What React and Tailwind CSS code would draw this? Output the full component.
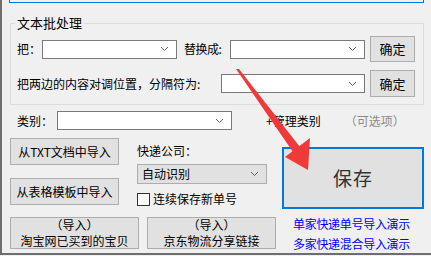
import React from 'react';

function Chevron() {
  return (
    <svg width="9" height="6" viewBox="0 0 9 6" className="shrink-0">
      <polyline points="1,1 4.5,4.5 8,1" fill="none" stroke="#606060" strokeWidth="1" />
    </svg>
  );
}

function Combo({ className, children }) {
  return (
    <div className={`flex items-center justify-between border border-[#7a7a7a] pl-[4px] pr-[7px] ${className}`}>
      <span className="leading-none">{children}</span>
      <Chevron />
    </div>
  );
}

function Btn({ className, children }) {
  return (
    <div className={`flex flex-col items-center justify-center border border-[#adadad] bg-[#e1e1e1] text-black ${className}`}>
      {children}
    </div>
  );
}

export default function App() {
  return (
    <div className="relative w-[431px] h-[256px] overflow-hidden bg-[#f0f0f0] font-['Noto_Sans_CJK_SC',sans-serif] text-[12px] text-black">
      <div className="h-[255px] border-l-2 border-b-2 border-[#6e6e6e]">
        {/* top input edge */}
        <div className="ml-[7px] w-[415px] h-[3px] border-x border-b border-[#0078d7] bg-[#f0f0f0]" />

        {/* 文本批处理 */}
        <fieldset className="ml-[8px] mt-[13px] w-[414px] border border-[#dcdcdc] pt-[6px] pb-[7px]">
          <legend className="ml-[4px] px-[2px] text-[13px] leading-[14px]">文本批处理</legend>

          <div className="flex items-center h-[26px]">
            <span className="ml-[6px] w-[25px] whitespace-nowrap">把：</span>
            <Combo className="w-[135px] h-[19px] bg-white" />
            <span className="ml-[7px] w-[46px] whitespace-nowrap tracking-[-0.5px]">替换成:</span>
            <Combo className="w-[135px] h-[19px] bg-white" />
            <Btn className="ml-[5px] w-[45px] h-[26px] text-[13px]">确定</Btn>
          </div>

          <div className="flex items-center h-[27px] mt-[8px]">
            <span className="ml-[6px] w-[204px] whitespace-nowrap">把两边的内容对调位置，分隔符为:</span>
            <Combo className="w-[144px] h-[19px] bg-white" />
            <Btn className="ml-[5px] w-[45px] h-[27px] text-[13px]">确定</Btn>
          </div>
        </fieldset>

        {/* 类别 */}
        <div className="flex items-center mt-[6px] h-[19px]">
          <span className="ml-[15px] w-[40px] whitespace-nowrap">类别：</span>
          <Combo className="w-[175px] h-[19px] bg-white" />
          <span className="ml-[34px] whitespace-nowrap">+管理类别</span>
          <span className="ml-[24px] whitespace-nowrap text-[#8a8a8a]">（可选项）</span>
        </div>

        <div className="flex mt-[8px] ml-[8px]">
          {/* left group */}
          <div className="flex flex-col w-[266px]">
            <div className="flex">
              <div className="flex flex-col gap-[13px]">
                <Btn className="w-[109px] h-[27px]">从TXT文档中导入</Btn>
                <Btn className="w-[109px] h-[27px]">从表格模板中导入</Btn>
              </div>
              <div className="flex flex-col ml-[18px]">
                <span className="mt-[6px] leading-[14px]">快递公司：</span>
                <Combo className="mt-[6px] w-[130px] h-[20px] bg-[#e1e1e1] border-[#adadad]">自动识别</Combo>
                <div className="flex items-center mt-[8px]">
                  <div className="w-[13px] h-[13px] border border-[#333] bg-white" />
                  <span className="ml-[3px] leading-[14px]">连续保存新单号</span>
                </div>
              </div>
            </div>
            <div className="flex gap-[8px] mt-[11px]">
              <Btn className="w-[129px] h-[32px] leading-[16px]">
                <span>（导入）</span>
                <span>淘宝网已买到的宝贝</span>
              </Btn>
              <Btn className="w-[129px] h-[32px] leading-[16px]">
                <span>（导入）</span>
                <span>京东物流分享链接</span>
              </Btn>
            </div>
          </div>

          {/* right column */}
          <div className="flex flex-col ml-[6px] mt-[9px]">
            <div className="flex items-center justify-center w-[142px] h-[62px] border-2 border-[#0078d7] bg-[#e1e1e1] text-[19px] text-[#333] tracking-[1px]">
              保存
            </div>
            <div className="flex flex-col ml-[11px] mt-[5px] text-[#0000ff] leading-[20px] tracking-[-0.3px]">
              <span>单家快递单号导入演示</span>
              <span>多家快递混合导入演示</span>
            </div>
          </div>
        </div>
      </div>

      {/* red arrow annotation */}
      <svg className="absolute left-0 top-0 pointer-events-none" width="431" height="256" viewBox="0 0 431 256">
        <polygon points="236,69 239,69 300,147 293,152" fill="#f03a3a" />
        <polygon points="285,157 310,138 308,170" fill="#f03a3a" />
      </svg>
    </div>
  );
}
